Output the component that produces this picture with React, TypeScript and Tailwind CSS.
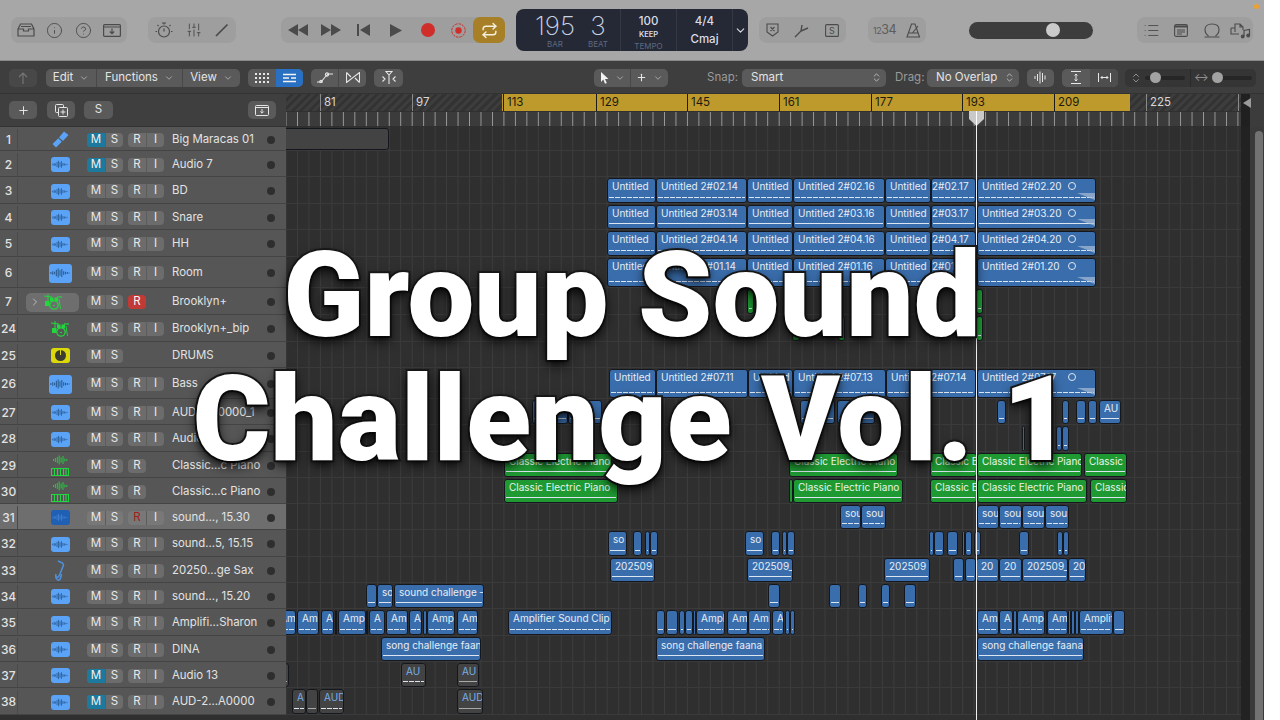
import React from 'react';
import { ChevronDown, ChevronRight, ChevronsUpDown, CircleHelp, Info, List, Repeat, SlidersVertical, Plus } from 'lucide-react';

type Reg = [number, number, string?, string?];
type Track = {
  n: number;
  name: string;
  h: number;
  icon: 'audio' | 'drum' | 'aux' | 'piano' | 'sax' | 'maracas';
  big?: boolean;
  m?: boolean;
  r?: 'none' | 'armed' | 'only' | 'dim';
  sel?: boolean;
  regs?: Reg[];
  color?: 'blue' | 'green' | 'grey';
};

// flags in the 4th slot: d = dotted wave, f = fade corner, o = loop circle, n = no wave, x = no left pad
const untitled = (row: string, wave: string): Reg[] => [
  [607, 656, 'Untitled', wave],
  [656, 747, `Untitled 2#${row}.14`, wave],
  [747, 793, 'Untitled', wave],
  [793, 885, `Untitled 2#${row}.16`, wave],
  [885, 931, 'Untitled', wave],
  [931, 976, `2#${row}.17`, wave + 'x'],
  [977, 1096, `Untitled 2#${row}.20`, wave + 'fo'],
];

const tracks: Track[] = [
  { n: 1, name: 'Big Maracas 01', h: 24, icon: 'maracas', m: true, color: 'grey', regs: [[280, 389, '', 'n']] },
  { n: 2, name: 'Audio 7', h: 26, icon: 'audio', m: true },
  { n: 3, name: 'BD', h: 27, icon: 'audio', regs: untitled('02', 'd') },
  { n: 4, name: 'Snare', h: 26, icon: 'audio', regs: untitled('03', '') },
  { n: 5, name: 'HH', h: 27, icon: 'audio', regs: untitled('04', 'd') },
  { n: 6, name: 'Room', h: 31, icon: 'audio', big: true, regs: untitled('01', 'd') },
  { n: 7, name: 'Brooklyn+', h: 27, icon: 'drum', r: 'armed', color: 'green', regs: [[747, 754], [976, 983]] },
  { n: 24, name: 'Brooklyn+_bip', h: 27, icon: 'drum', color: 'green', regs: [[792, 800], [838, 845], [976, 983]] },
  { n: 25, name: 'DRUMS', h: 26, icon: 'aux', r: 'none' },
  {
    n: 26, name: 'Bass', h: 31, icon: 'audio', big: true,
    regs: [
      [609, 656, 'Untitled', 'd'], [656, 748, 'Untitled 2#07.11', 'd'], [748, 793, 'Untitled', 'd'],
      [793, 886, 'Untitled 2#07.13', 'd'], [886, 930, 'Untitled', 'd'], [930, 976, '2#07.14', 'dx'], [977, 1096, 'Untitled 2#07.17', 'dfo'],
    ],
  },
  {
    n: 27, name: 'AUD-2...0000_1', h: 26, icon: 'audio',
    regs: [[532, 568, 'AU'], [568, 602, '2'], [800, 835], [837, 875], [997, 1006], [1062, 1069], [1076, 1086], [1088, 1097], [1099, 1121, 'AU']],
  },
  { n: 28, name: 'Audio 8', h: 27, icon: 'audio', regs: [[1022, 1025], [1056, 1062], [1062, 1069]] },
  {
    n: 29, name: 'Classic...c Piano', h: 26, icon: 'piano', r: 'only', color: 'green',
    regs: [[504, 612, 'Classic Electric Piano'], [789, 898, 'Classic Electric Piano'], [930, 977, 'Classic E'], [977, 1082, 'Classic Electric Piano'], [1084, 1127, 'Classic']],
  },
  {
    n: 30, name: 'Classic...c Piano', h: 26, icon: 'piano', r: 'only', color: 'green',
    regs: [[504, 618, 'Classic Electric Piano'], [789, 793], [793, 903, 'Classic Electric Piano'], [930, 977, 'Classic E'], [977, 1087, 'Classic Electric Piano'], [1090, 1127, 'Classic']],
  },
  {
    n: 31, name: 'sound..., 15.30', h: 26, icon: 'audio', r: 'dim', sel: true,
    regs: [[840, 861, 'sou', 'd'], [861, 886, 'sou', 'd'], [977, 999, 'sou', 'd'], [999, 1022, 'sou', 'd'], [1022, 1045, 'sou', 'd'], [1045, 1069, 'sou', 'd']],
  },
  {
    n: 32, name: 'sound...5, 15.15', h: 27, icon: 'audio',
    regs: [[608, 627, 'so'], [633, 642], [645, 650], [650, 658], [745, 764, 'so'], [771, 780], [782, 787], [787, 795], [929, 934], [934, 944], [947, 958], [962, 965], [965, 972], [974, 981], [1019, 1029], [1057, 1063], [1063, 1069]],
  },
  {
    n: 33, name: '20250...ge Sax', h: 26, icon: 'sax',
    regs: [[610, 655, '202509'], [747, 793, '202509_'], [884, 930, '202509'], [953, 964], [965, 976], [976, 999, '20'], [999, 1022, '20'], [1022, 1068, '202509_'], [1068, 1086, '20']],
  },
  {
    n: 34, name: 'sound..., 15.20', h: 26, icon: 'audio',
    regs: [[366, 377], [377, 393, 'so'], [394, 484, 'sound challenge –'], [768, 780], [829, 841], [858, 867], [881, 890], [904, 916]],
  },
  {
    n: 35, name: 'Amplifi...Sharon', h: 27, icon: 'audio',
    regs: [
      [275, 296, 'Am', 'd'], [297, 319, 'Am', 'd'], [321, 334, 'A', 'd'], [335, 337], [338, 366, 'Amp', 'd'], [366, 368], [369, 385, 'A', 'd'], [386, 408, 'Am', 'd'], [409, 422, 'A', 'd'], [423, 427], [427, 455, 'Ampl', 'd'], [457, 478, 'Am', 'd'],
      [508, 612, 'Amplifier Sound Clip', 'd'], [656, 665], [666, 678], [679, 685], [685, 693], [693, 696], [696, 725, 'Ampl', 'd'], [727, 748, 'Am', 'd'], [748, 771, 'Am', 'd'], [772, 784, 'A', 'd'], [785, 790], [790, 795],
      [977, 999, 'Am', 'd'], [999, 1013, 'A', 'd'], [1013, 1017], [1017, 1045, 'Amp', 'd'], [1046, 1047], [1047, 1068, 'Am', 'd'], [1068, 1071], [1071, 1075], [1075, 1079], [1079, 1113, 'Amplif', 'd'], [1113, 1125],
    ],
  },
  { n: 36, name: 'DINA', h: 26, icon: 'audio', regs: [[381, 481, 'song challenge faan'], [656, 765, 'song challenge faana .'], [977, 1084, 'song challenge faana .']] },
  { n: 37, name: 'Audio 13', h: 26, icon: 'audio', m: true, color: 'grey', regs: [[270, 289], [401, 426, 'AU', 'd'], [457, 479, 'AU']] },
  { n: 38, name: 'AUD-2...A0000', h: 27, icon: 'audio', m: true, color: 'grey', regs: [[292, 306, 'A', 'd'], [306, 318], [319, 344, 'AUD', 'd'], [457, 483, 'AUD']] },
];

const bars = [
  [81, 320], [97, 412], [113, 503], [129, 596], [145, 687], [161, 779], [177, 871], [193, 962], [209, 1054], [225, 1146], [241, 1238],
];

function AudioIcon({ big, dark }: { big?: boolean; dark?: boolean }) {
  const hs = [2, 4, 3, 7, 10, 6, 9, 4, 3, 2, 1];
  return (
    <div className={`flex items-center justify-center rounded-[3px] ${big ? 'w-[23px] h-[19px]' : 'w-[19px] h-[15px]'} ${dark ? 'bg-[#1f5fb4]' : 'bg-[#5aa3f7]'}`}>
      <svg width={big ? 20 : 16} height={big ? 14 : 11} viewBox="0 0 22 12" stroke={dark ? '#3f7fcf' : '#2c5d94'} strokeWidth="1.2">
        {hs.map((h, i) => (
          <line key={i} x1={1 + i * 2} x2={1 + i * 2} y1={6 - h / 2} y2={6 + h / 2} />
        ))}
      </svg>
    </div>
  );
}

function DrumIcon() {
  return (
    <svg width="18" height="16" viewBox="0 0 18 16" fill="#22d63e" stroke="#22d63e">
      <line x1="0" y1="2" x2="8" y2="3" strokeWidth="1.2" />
      <line x1="4" y1="0" x2="4" y2="7" strokeWidth="1" />
      <line x1="13" y1="3" x2="18" y2="3" strokeWidth="1.2" />
      <rect x="6" y="3.5" width="3.5" height="3.5" stroke="none" />
      <rect x="10.5" y="3.5" width="3.5" height="3.5" stroke="none" />
      <rect x="1" y="7" width="4.5" height="5" stroke="none" />
      <circle cx="10" cy="11" r="4.2" fill="none" strokeWidth="1.3" />
      <rect x="9" y="11" width="2" height="1" stroke="none" />
      <line x1="15" y1="5" x2="16.5" y2="15" strokeWidth="0.9" />
    </svg>
  );
}

function PianoIcon() {
  const hs = [2, 4, 6, 9, 5, 8, 3, 2];
  return (
    <svg width="18" height="21" viewBox="0 0 18 21" stroke="#22d63e" fill="none">
      {hs.map((h, i) => (
        <line key={i} x1={2.5 + i * 1.9} x2={2.5 + i * 1.9} y1={5 - h / 2} y2={5 + h / 2} strokeWidth="0.9" />
      ))}
      <rect x="0.5" y="13.5" width="17" height="7" strokeWidth="1" />
      {[3.5, 6.5, 9.5, 12.5, 15].map((x) => (
        <line key={x} x1={x} x2={x} y1="13.5" y2="20.5" strokeWidth="1.1" />
      ))}
    </svg>
  );
}

function SaxIcon() {
  return (
    <svg width="12" height="21" viewBox="0 0 12 21" fill="none" stroke="#4f8fd8">
      <path d="M4 1 L8.5 3 L9.5 5 L6 14 C5 17 3 18 2 16.5" strokeWidth="1.6" />
      <path d="M2 14 C1 18 3 20.5 5 20 C6.5 19.5 7 17 7.5 14" strokeWidth="1.6" />
    </svg>
  );
}

function MaracasIcon() {
  return (
    <svg width="17" height="17" viewBox="0 0 17 17" fill="#5aa3f7">
      <path d="M12 0.5 L16.5 4 L11 10 L7 6.5 Z" />
      <path d="M6.3 7.3 L9.8 10.8 L4 16.5 L0.5 13 Z" />
    </svg>
  );
}

function AuxIcon() {
  return (
    <div className="flex items-center justify-center w-[19px] h-[15px] rounded-[3px] bg-[#dcd80a]">
      <div className="flex justify-center w-[11px] h-[11px] rounded-full bg-[#3c3c32]">
        <div className="w-[1px] h-[5px] bg-[#dcd80a]" />
      </div>
    </div>
  );
}

function TrackIcon({ t }: { t: Track }) {
  if (t.icon === 'audio') return <AudioIcon big={t.big} dark={t.sel} />;
  if (t.icon === 'drum') return <DrumIcon />;
  if (t.icon === 'piano') return <PianoIcon />;
  if (t.icon === 'sax') return <SaxIcon />;
  if (t.icon === 'aux') return <AuxIcon />;
  return <MaracasIcon />;
}

function Region({ reg, color }: { reg: Reg; color: string }) {
  const [x0, x1, label, flags = ''] = reg;
  const skin =
    color === 'green'
      ? 'bg-[#1f9a33] text-[#e8f5ea]'
      : color === 'grey'
        ? 'bg-[#434343] text-[#78aee8]'
        : 'bg-[#3a6dab] text-[#e6edf6]';
  return (
    <div
      className={`absolute top-[1px] bottom-0 overflow-hidden border border-[#14181e] rounded-[3px] text-[10px] leading-[11px] ${skin}`}
      style={{ left: x0 - 286, width: x1 - x0 }}
    >
      {label && <div className={`whitespace-nowrap pt-[2px] ${flags.includes('x') ? 'pl-0' : 'pl-[4px]'}`}>{label}</div>}
      {flags.includes('o') && <div className="absolute left-[90px] top-[3px] w-[8px] h-[8px] rounded-full border border-[#dfe8f2]" />}
      {x1 - x0 > 4 && !flags.includes('n') && (
        <div
          className={`absolute left-[1px] right-[1px] bottom-[4px] h-[1px] ${
            flags.includes('d')
              ? 'bg-[repeating-linear-gradient(90deg,#dbe6f2_0,#dbe6f2_5px,transparent_5px,transparent_6px)]'
              : color === 'grey'
                ? 'bg-[#a8a8a8]'
                : 'bg-[#dbe6f2]'
          }`}
        />
      )}
      {flags.includes('f') && (
        <svg className="absolute right-0 bottom-[2px]" width="18" height="7" viewBox="0 0 18 7">
          <polygon points="0,0 18,0 18,7" fill="#a9bdd6" opacity="0.7" />
        </svg>
      )}
    </div>
  );
}

function TrackBtn({ label, on, cls = '' }: { label: string; on?: boolean; cls?: string }) {
  return (
    <div className={`flex items-center justify-center w-[18px] h-full text-[11.5px] ${on ? 'bg-[#1c7a9e] text-[#f2f2f2]' : 'text-[#e8e8e8]'} ${cls}`}>{label}</div>
  );
}

function TrackRow({ t }: { t: Track }) {
  const btnBg = t.sel ? 'bg-[#787878]' : 'bg-[#6c6c6c]';
  return (
    <div className="flex" style={{ height: t.h }}>
      <div className={`flex items-center w-[286px] shrink-0 pt-[2px] border-b border-[#444444] text-[#e2e2e2] ${t.sel ? 'bg-[#6e6e6e]' : 'bg-[#565656]'}`}>
        <div className="flex items-center justify-center w-[18px] h-full border-r border-[#4a4a4a] text-[12px] font-medium">{t.n}</div>
        {t.n === 7 ? (
          <div className="flex items-center justify-center w-[69px] pl-[8px] pr-[8px]">
            <div className="relative flex items-center justify-center w-[53px] h-[19px] rounded-[5px] bg-[#6e6e6e]">
              <ChevronRight className="absolute left-[3px]" size={12} color="#dddddd" strokeWidth={1.4} />
              <DrumIcon />
            </div>
          </div>
        ) : (
          <div className="flex items-center justify-center w-[69px] pl-[15px]">
            <TrackIcon t={t} />
          </div>
        )}
        <div className={`flex w-[36px] h-[14px] rounded-[4px] overflow-hidden ${btnBg}`}>
          <TrackBtn label="M" on={t.m} />
          <TrackBtn label="S" cls="border-l border-[#5c5c5c]" />
        </div>
        <div className="w-[5px]" />
        <div className="flex w-[36px] h-[14px]">
          {t.r === 'armed' && <div className="flex items-center justify-center w-[18px] rounded-[4px] bg-[#c23a35] text-[11.5px] text-[#f5f5f5]">R</div>}
          {t.r === 'only' && <div className="flex items-center justify-center w-[18px] rounded-[4px] bg-[#6c6c6c] text-[11.5px] text-[#e8e8e8]">R</div>}
          {(!t.r || t.r === 'dim') && (
            <div className={`flex w-[36px] rounded-[4px] overflow-hidden ${btnBg}`}>
              <TrackBtn label="R" cls={t.r === 'dim' ? '!text-[#a81c1c]' : ''} />
              <TrackBtn label="I" cls="border-l border-[#5c5c5c]" />
            </div>
          )}
        </div>
        <div className="flex-1 pl-[8px] text-[11.4px] whitespace-nowrap overflow-hidden">{t.name}</div>
        <div className="w-[8px] h-[8px] mr-[11px] rounded-full bg-[#2e2e2e]" />
      </div>
      <div className="relative flex-1 overflow-hidden border-b border-[#3a3a3a] bg-[#2f2f2f] bg-[linear-gradient(90deg,#3d3d3d_1px,transparent_1px)] bg-[size:11.47px_100%] bg-[position:11px_0]">
        {t.regs?.map((r, i) => <Region key={i} reg={r} color={t.color ?? 'blue'} />)}
      </div>
    </div>
  );
}

function Group({ w, children, cls = '' }: { w: number; children: React.ReactNode; cls?: string }) {
  return (
    <div className={`flex items-center justify-around h-[26px] rounded-[8px] bg-[#9e9e9e] ${cls}`} style={{ width: w }}>
      {children}
    </div>
  );
}

function Btn({ w, children, cls = '' }: { w: number; children?: React.ReactNode; cls?: string }) {
  return (
    <div className={`flex items-center justify-center gap-[6px] h-[18px] whitespace-nowrap text-[#e4e4e4] text-[11.5px] ${cls}`} style={{ width: w }}>
      {children}
    </div>
  );
}

function Cell({ w, children }: { w: number; children: React.ReactNode }) {
  return (
    <div className="flex items-center justify-center" style={{ width: w }}>
      {children}
    </div>
  );
}

const ink = '#4b4b4b';

export default function App() {
  return (
    <div className="relative w-[1280px] h-[720px] overflow-hidden bg-white font-[Inter,sans-serif]">
      <div className="relative w-[1264px] h-[720px] overflow-hidden flex flex-col">
        {/* top toolbar */}
        <div className="flex items-center h-[61px] shrink-0 pl-[11px] bg-[#a7a7a7] border-b border-[#8a8a8a]">
          <Group w={116}>
            <svg width="18" height="14" viewBox="0 0 18 14" fill="none" stroke={ink} strokeWidth="1.2">
              <path d="M1 6 L3.5 1 H14.5 L17 6 V13 H1 Z M1 6 H6.5 V8 H11.5 V6 H17 M4 3.5 H14" />
            </svg>
            <Info size={17} color={ink} strokeWidth={1.3} />
            <CircleHelp size={17} color={ink} strokeWidth={1.3} />
            <svg width="18" height="13" viewBox="0 0 18 13" fill="none" stroke={ink} strokeWidth="1.2">
              <rect x="0.6" y="0.6" width="16.8" height="11.8" rx="1" />
              <path d="M1 3 H17 M9 4.5 V9.5 M6.8 7.5 L9 9.7 L11.2 7.5" />
            </svg>
          </Group>
          <Group w={88} cls="ml-[21px]">
            <svg width="18" height="17" viewBox="0 0 18 17" fill="none" stroke={ink} strokeWidth="1.2">
              <circle cx="9" cy="9.5" r="5.5" />
              <path d="M9 6.5 V9.5 M9 1 V2.5 M2.5 3 L3.5 4 M15.5 3 L14.5 4 M0.5 9.5 H2 M16 9.5 H17.5 M7 1 H11" />
            </svg>
            <SlidersVertical size={16} color={ink} strokeWidth={1.4} />
            <svg width="14" height="14" viewBox="0 0 14 14" fill="none" stroke={ink} strokeWidth="1.7">
              <path d="M1 13 L12.5 1.5" />
            </svg>
          </Group>
          <div className="flex items-center w-[224px] h-[26px] ml-[45px] rounded-[8px] bg-[#9e9e9e]">
            <Cell w={33}>
              <svg width="20" height="12" viewBox="0 0 20 12" fill="#4b4b4b">
                <path d="M10 0 V12 L0 6 Z M20 0 V12 L10 6 Z" />
              </svg>
            </Cell>
            <Cell w={33}>
              <svg width="20" height="12" viewBox="0 0 20 12" fill="#4b4b4b">
                <path d="M0 0 V12 L10 6 Z M10 0 V12 L20 6 Z" />
              </svg>
            </Cell>
            <Cell w={32}>
              <svg width="13" height="12" viewBox="0 0 13 12" fill="#4b4b4b">
                <path d="M0 0 H2 V12 H0 Z M13 0 V12 L3 6 Z" />
              </svg>
            </Cell>
            <Cell w={33}>
              <svg width="12" height="13" viewBox="0 0 12 13" fill="#4b4b4b">
                <path d="M0 0 V13 L12 6.5 Z" />
              </svg>
            </Cell>
            <Cell w={31}>
              <div className="w-[14px] h-[14px] rounded-full bg-[#cf2e2a]" />
            </Cell>
            <Cell w={30}>
              <svg width="15" height="15" viewBox="0 0 15 15">
                <circle cx="7.5" cy="7.5" r="6.7" fill="none" stroke="#cf2e2a" strokeWidth="1" strokeDasharray="2.6 0.9" />
                <circle cx="7.5" cy="7.5" r="3.2" fill="#cf2e2a" />
              </svg>
            </Cell>
            <div className="flex items-center justify-center w-[32px] h-[26px] rounded-[7px] bg-[#a67f26]">
              <Repeat size={17} color="#f4efe0" strokeWidth={2} />
            </div>
          </div>
          <div className="flex items-stretch w-[232px] h-[42px] ml-[11px] rounded-[8px] bg-[#252835] text-[#d8dde6]">
            <div className="flex w-[105px] pl-[16px] gap-[12px] border-r border-[#343746]">
              <div className="flex flex-col items-center w-[46px]">
                <div className="text-[26px] leading-[28px] mt-[3px] font-extralight text-[#c6d3e4]">195</div>
                <div className="text-[8px] leading-[9px] text-[#5e6880]">BAR</div>
              </div>
              <div className="flex flex-col items-center w-[16px]">
                <div className="text-[26px] leading-[28px] mt-[3px] font-extralight text-[#c6d3e4]">3</div>
                <div className="text-[8px] leading-[9px] text-[#5e6880]">BEAT</div>
              </div>
            </div>
            <div className="flex flex-col items-center w-[56px] pt-[5px] border-r border-[#343746]">
              <div className="text-[11.5px] leading-[14px] font-medium">100</div>
              <div className="text-[7.5px] leading-[10px] mt-[2px] font-semibold">KEEP</div>
              <div className="text-[8px] leading-[10px] mt-[1px] text-[#5e6880]">TEMPO</div>
            </div>
            <div className="flex flex-col items-center w-[56px] pt-[5px] border-r border-[#343746]">
              <div className="text-[11.5px] leading-[14px] font-medium">4/4</div>
              <div className="text-[11.5px] leading-[14px] mt-[4px] font-medium">Cmaj</div>
            </div>
            <div className="flex items-center justify-center flex-1">
              <ChevronDown size={13} color="#d8dde6" strokeWidth={2} />
            </div>
          </div>
          <Group w={87} cls="ml-[11px]">
            <svg width="13" height="14" viewBox="0 0 13 14" fill="none" stroke={ink} strokeWidth="1.1">
              <path d="M1 1 H12 V9 L6.5 13 L1 9 Z M4.5 4 L8.5 8 M8.5 4 L4.5 8" />
            </svg>
            <svg width="16" height="16" viewBox="0 0 16 16" fill="none" stroke={ink} strokeWidth="1.4">
              <path d="M1 15 L7 9 M7 9 L8 3 M7 9 L14 6" />
            </svg>
            <svg width="14" height="13" viewBox="0 0 14 13" fill="none" stroke={ink} strokeWidth="1.1">
              <rect x="0.6" y="0.6" width="12.8" height="11.8" rx="1" />
              <text x="7" y="10" fontSize="9" textAnchor="middle" fill={ink} stroke="none">S</text>
            </svg>
          </Group>
          <Group w={58} cls="ml-[22px]">
            <div className="text-[12.5px] text-[#5c5c5c] tracking-[-0.5px]"><span className="text-[9px]">12</span>34</div>
            <svg width="15" height="15" viewBox="0 0 15 15" fill="none" stroke={ink} strokeWidth="1.1">
              <path d="M5.5 1 H9 L13.5 14 H1 Z M3 10 H12 M6.5 10 L12 3" />
            </svg>
          </Group>
          <div className="relative w-[124px] h-[17px] ml-[43px] rounded-full bg-[#3d3d3d]">
            <div className="absolute left-[77px] top-[1.5px] w-[14px] h-[14px] rounded-full bg-[#cbcbcb]" />
          </div>
          <div className="flex items-center w-[116px] h-[26px] ml-[44px] rounded-[8px] bg-[#9e9e9e]">
            <Cell w={29}><List size={17} color={ink} strokeWidth={1.3} /></Cell>
            <Cell w={30}>
              <svg width="14" height="13" viewBox="0 0 14 13" fill="none" stroke={ink} strokeWidth="1.1">
                <rect x="0.6" y="0.6" width="12.8" height="11.8" rx="1.5" />
                <path d="M0.6 2.5 H13.4" strokeWidth="2" />
                <path d="M3 6 H11 M3 8 H11 M3 10 H8" />
              </svg>
            </Cell>
            <Cell w={31}>
              <svg width="16" height="15" viewBox="0 0 16 15" fill="none" stroke={ink} strokeWidth="1.1">
                <path d="M4.5 13 C1.5 11 1 8 1 6.5 C1 3 4 1 8 1 C12 1 15 3 15 6.5 C15 8 14.5 11 11.5 13 M0.5 14 H15.5" />
              </svg>
            </Cell>
            <Cell w={26}>
              <svg width="21" height="17" viewBox="0 0 21 17" fill="none" stroke={ink} strokeWidth="1.1">
                <path d="M1 6 H5 M1 6 V12 H9 M5 10 V2 H10 L13 5 V8 M10 2 V5 H13" />
                <path d="M14 14 V8.5 L19.5 7.5 V13" strokeWidth="1.2" />
                <circle cx="12.7" cy="14.5" r="1.4" fill={ink} />
                <circle cx="18.2" cy="13.5" r="1.4" fill={ink} />
              </svg>
            </Cell>
          </div>
        </div>

        {/* region toolbar */}
        <div className="flex items-center h-[33px] shrink-0 pl-[9px] pt-[1px] bg-[#3e3e3e] border-b border-[#333333] text-[11.5px]">
          <Btn w={28} cls="rounded-[5px] bg-[#484848]">
            <svg width="10" height="12" viewBox="0 0 10 12" fill="none" stroke="#757575" strokeWidth="1.2">
              <path d="M5 12 V1 M1 5 L5 1 L9 5" />
            </svg>
          </Btn>
          <div className="flex ml-[9px] rounded-[5px] overflow-hidden bg-[#5a5a5a] divide-x divide-[#484848]">
            <Btn w={51}>Edit<ChevronDown size={10} color="#b5b5b5" /></Btn>
            <Btn w={86}>Functions<ChevronDown size={10} color="#b5b5b5" /></Btn>
            <Btn w={57}>View<ChevronDown size={10} color="#b5b5b5" /></Btn>
          </div>
          <div className="flex ml-[8px] rounded-[5px] overflow-hidden bg-[#5a5a5a]">
            <Btn w={28}>
              <div className="grid grid-cols-4 gap-[2px]">
                {Array.from({ length: 12 }).map((_, i) => (
                  <div key={i} className="w-[2px] h-[2px] bg-[#e6e6e6]" />
                ))}
              </div>
            </Btn>
            <Btn w={27} cls="bg-[#2a70c2]">
              <svg width="13" height="10" viewBox="0 0 13 10" stroke="#f2f2f2" strokeWidth="1.5">
                <path d="M0 1.5 H13 M0 5 H6 M8 5 H13 M0 8.5 H13" />
              </svg>
            </Btn>
          </div>
          <div className="flex ml-[8px] rounded-[5px] overflow-hidden bg-[#5a5a5a] divide-x divide-[#484848]">
            <Btn w={28}>
              <svg width="16" height="11" viewBox="0 0 16 11" fill="none" stroke="#e6e6e6" strokeWidth="1.1">
                <path d="M0 10 H4 L9 4 L11 2 H16" />
                <circle cx="10" cy="2.5" r="1.6" />
                <circle cx="4" cy="9.5" r="1.2" />
              </svg>
            </Btn>
            <Btn w={27}>
              <svg width="14" height="11" viewBox="0 0 14 11" fill="none" stroke="#e6e6e6" strokeWidth="1.1">
                <path d="M0.5 0.5 V10.5 L13.5 0.5 V10.5 M0.5 0.5 L5 5 M13.5 10.5 L9 6" />
              </svg>
            </Btn>
          </div>
          <Btn w={29} cls="ml-[8px] rounded-[5px] bg-[#5a5a5a]">
            <svg width="14" height="13" viewBox="0 0 14 13" fill="none" stroke="#e6e6e6" strokeWidth="1.1">
              <path d="M7 3 V13 M4 0.5 H10 L7 4 Z M0.5 5.5 L3 8 L0.5 10.5 M13.5 5.5 L11 8 L13.5 10.5" />
            </svg>
          </Btn>
          <div className="flex ml-[191px] rounded-[5px] overflow-hidden bg-[#5a5a5a] divide-x divide-[#484848]">
            <Btn w={37}>
              <svg width="9" height="12" viewBox="0 0 9 12" fill="#f2f2f2">
                <path d="M1 0 L8.5 7 H5 L6.8 11 L5 11.8 L3.3 7.5 L1 10 Z" />
              </svg>
              <ChevronDown size={10} color="#b5b5b5" />
            </Btn>
            <Btn w={37}>
              <Plus size={11} color="#e6e6e6" strokeWidth={2.4} />
              <ChevronDown size={10} color="#b5b5b5" />
            </Btn>
          </div>
          <div className="ml-[39px] w-[31px] text-[#9a9a9a]">Snap:</div>
          <Btn w={144} cls="ml-[4px] rounded-[5px] bg-[#5a5a5a] !justify-between pl-[9px] pr-[4px]">
            Smart<ChevronsUpDown size={11} color="#bdbdbd" />
          </Btn>
          <div className="ml-[9px] w-[31px] text-[#9a9a9a]">Drag:</div>
          <Btn w={92} cls="ml-[1px] rounded-[5px] bg-[#5a5a5a] !justify-between !gap-0 pl-[9px] pr-[4px]">
            No Overlap<ChevronsUpDown size={11} color="#bdbdbd" />
          </Btn>
          <Btn w={27} cls="ml-[8px] rounded-[5px] bg-[#5a5a5a]">
            <svg width="13" height="13" viewBox="0 0 13 13" stroke="#e6e6e6" strokeWidth="1">
              <path d="M1 5 V8 M3.5 3 V10 M6 0.5 V12.5 M8.5 2 V11 M11 4.5 V8.5" />
            </svg>
          </Btn>
          <div className="flex ml-[8px] rounded-[5px] overflow-hidden bg-[#5a5a5a]">
            <Btn w={28}>
              <svg width="10" height="13" viewBox="0 0 10 13" fill="none" stroke="#e6e6e6" strokeWidth="1">
                <path d="M0 0.5 H10 M0 12.5 H10 M5 3 V10 M3.5 4.5 L5 3 L6.5 4.5 M3.5 8.5 L5 10 L6.5 8.5" />
              </svg>
            </Btn>
            <Btn w={28} cls="bg-[#4e4e4e]">
              <svg width="13" height="9" viewBox="0 0 13 9" fill="none" stroke="#e6e6e6" strokeWidth="1">
                <path d="M0.5 0 V9 M12.5 0 V9 M3 4.5 H10 M4.5 3 L3 4.5 L4.5 6 M8.5 3 L10 4.5 L8.5 6" />
              </svg>
            </Btn>
          </div>
          <div className="flex items-center w-[131px] h-[18px] ml-[7px] rounded-[5px] bg-[#353535]">
            <div className="flex items-center justify-center w-[18px] ml-[2px]">
              <ChevronsUpDown size={12} color="#8e8e8e" />
            </div>
            <div className="relative w-[40px] h-[4px] rounded-full bg-[#262626]">
              <div className="absolute left-[5px] top-[-3.5px] w-[11px] h-[11px] rounded-full bg-[#a2a2a2]" />
            </div>
            <div className="w-[1px] h-[18px] ml-[5px] bg-[#2a2a2a]" />
            <div className="w-[14px] ml-[3px] text-[11px] text-[#8e8e8e]">↔</div>
            <div className="relative w-[40px] h-[4px] ml-[4px] rounded-full bg-[#262626]">
              <div className="absolute left-0 top-[-3.5px] w-[11px] h-[11px] rounded-full bg-[#a2a2a2]" />
            </div>
          </div>
        </div>

        {/* tracks header + ruler */}
        <div className="flex h-[33px] shrink-0 bg-[#3f3f3f]">
          <div className="flex items-center w-[286px] shrink-0 pl-[9px] border-b border-[#333333]">
            <Btn w={28} cls="rounded-[5px] bg-[#5a5a5a]">
              <Plus size={13} color="#e6e6e6" strokeWidth={1.8} />
            </Btn>
            <Btn w={28} cls="ml-[10px] rounded-[5px] bg-[#5a5a5a]">
              <svg width="13" height="13" viewBox="0 0 13 13" fill="none" stroke="#e6e6e6" strokeWidth="1">
                <rect x="0.5" y="0.5" width="8" height="8" rx="1" />
                <rect x="3.5" y="3.5" width="9" height="9" rx="1" fill="#5a5a5a" />
                <path d="M8 5.5 V10.5 M5.5 8 H10.5" />
              </svg>
            </Btn>
            <Btn w={29} cls="ml-[9px] rounded-[5px] bg-[#5a5a5a]">S</Btn>
            <Btn w={28} cls="ml-[135px] rounded-[5px] bg-[#5a5a5a]">
              <svg width="14" height="11" viewBox="0 0 14 11" fill="none" stroke="#e6e6e6" strokeWidth="1">
                <rect x="0.5" y="0.5" width="13" height="10" rx="1" />
                <path d="M0.5 2.5 H13.5 M7 4 V8 M5.3 6.5 L7 8.2 L8.7 6.5" />
              </svg>
            </Btn>
          </div>
          <div className="relative flex-1 flex flex-col overflow-hidden">
            <div className="flex h-[17px] bg-[#343434]">
              <div className="w-[216px] bg-[repeating-linear-gradient(135deg,#3d3d3d_0,#3d3d3d_3px,#333333_3px,#333333_6px)]" />
              <div className="w-[628px] bg-[#bd9a2b]" />
              <div className="flex-1 bg-[repeating-linear-gradient(135deg,#3d3d3d_0,#3d3d3d_3px,#333333_3px,#333333_6px)]" />
            </div>
            <div className="flex-1 bg-[#3b3b3b] bg-[linear-gradient(90deg,#9a9a9a_1px,transparent_1px)] bg-[size:11.47px_100%] bg-[position:11px_0] border-y border-[#303030]" />
            {bars.map(([bar, x]) => (
              <div
                key={bar}
                className={`absolute top-0 h-[17px] pl-[3px] border-l text-[11.5px] leading-[16px] whitespace-nowrap ${
                  x >= 503 && x < 1130 ? 'border-[#1c1c1c] text-[#1c1a10]' : 'border-[#8a8a8a] text-[#d8d8d8]'
                }`}
                style={{ left: x - 286 }}
              >
                {bar}
              </div>
            ))}
            {/* scroller gutter hides the last bar number */}
            <div className="absolute right-0 top-0 bottom-0 flex w-[23px] bg-[#3c3c3c]">
              <div className="w-[9px] bg-[#202020]" />
            </div>
            <svg className="absolute left-[957px] top-[4px]" width="8" height="10" viewBox="0 0 8 10">
              <path d="M8 0 L0 5 L8 10 Z" fill="#9a9a9a" />
            </svg>
          </div>
        </div>

        {/* tracks */}
        <div className="flex flex-1 min-h-0">
          <div className="w-[1241px] shrink-0 bg-[#2f2f2f]">
            {tracks.map((t) => (
              <TrackRow key={t.n} t={t} />
            ))}
          </div>
          <div className="flex flex-1 bg-[#3a3a3a]">
            <div className="w-[9px] bg-[#222222]" />
            <div className="w-[8px] ml-[5px] mt-[4px] rounded-t-[4px] bg-[#727272]" />
          </div>
        </div>

        {/* playhead */}
        <div className="absolute left-[976px] top-[111px] bottom-0 w-[1px] bg-[#f0f0f0]" />
        <svg className="absolute left-[969px] top-[111px]" width="15" height="15" viewBox="0 0 15 15">
          <path d="M0 0 H15 V8 L7.5 15 L0 8 Z" fill="#c9c9c9" />
          <line x1="7.5" x2="7.5" y1="0" y2="15" stroke="#ffffff" />
        </svg>

        {/* thumbnail title over the window */}
        <div className="absolute left-0 top-[234px] w-full text-center font-[Roboto,sans-serif] font-black text-[119px] leading-[124px] text-white [-webkit-text-stroke:4px_#1c1c1c] [paint-order:stroke_fill] [text-shadow:0_5px_12px_rgba(0,0,0,0.8),0_2px_4px_rgba(0,0,0,0.5)]">
          <div>Group Sound</div>
          <div>Challenge Vol. 1</div>
        </div>
        <div className="absolute right-[5px] top-[4px] w-[5px] h-[5px] rounded-full bg-[#f0a030]" />
      </div>
    </div>
  );
}
